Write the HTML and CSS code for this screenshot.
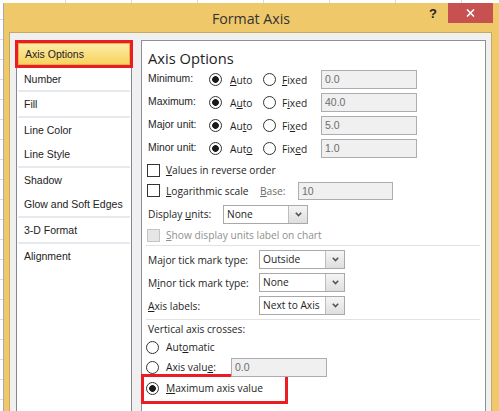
FILE: index.html
```html
<!DOCTYPE html>
<html>
<head>
<meta charset="utf-8">
<link rel="stylesheet" href="styles.css">
</head>
<body>
<div class="dialog">
  <div class="titlebar">
    <div class="title">Format Axis</div>
    <div class="controls">
      <span class="help">?</span>
      <span class="close"><svg width="9" height="8" viewBox="0 0 9 8"><path d="M1 0.5 L8 7.5 M8 0.5 L1 7.5" stroke="#fff" stroke-width="1.6" fill="none"/></svg></span>
    </div>
  </div>
  <div class="client">
    <div class="nav">
      <div class="nav-sel"><span>Axis Options</span></div>
      <div class="item short">Number</div>
      <div class="sep"></div>
      <div class="item">Fill</div>
      <div class="sep"></div>
      <div class="item">Line Color</div>
      <div class="item">Line Style</div>
      <div class="sep"></div>
      <div class="item">Shadow</div>
      <div class="item">Glow and Soft Edges</div>
      <div class="sep"></div>
      <div class="item">3-D Format</div>
      <div class="sep"></div>
      <div class="item">Alignment</div>
    </div>
    <div class="panel">
      <div class="heading">Axis Options</div>

      <div class="axrow">
        <span class="lab-t">Minimum:</span>
        <span class="opt"><span class="radio on"></span><span><u>A</u>uto</span></span>
        <span class="opt opt2"><span class="radio"></span><span><u>F</u>ixed</span></span>
        <span class="field">0.0</span>
      </div>
      <div class="axrow">
        <span class="lab-t">Maximum:</span>
        <span class="opt"><span class="radio on"></span><span>A<u>u</u>to</span></span>
        <span class="opt opt2"><span class="radio"></span><span>F<u>i</u>xed</span></span>
        <span class="field">40.0</span>
      </div>
      <div class="axrow">
        <span class="lab-t">Major unit:</span>
        <span class="opt"><span class="radio on"></span><span>Au<u>t</u>o</span></span>
        <span class="opt opt2"><span class="radio"></span><span>Fi<u>x</u>ed</span></span>
        <span class="field">5.0</span>
      </div>
      <div class="axrow">
        <span class="lab-t">Minor unit:</span>
        <span class="opt"><span class="radio on"></span><span>Aut<u>o</u></span></span>
        <span class="opt opt2"><span class="radio"></span><span>Fix<u>e</u>d</span></span>
        <span class="field">1.0</span>
      </div>

      <div class="chkrow r1"><span class="cb"></span><span><u>V</u>alues in reverse order</span></div>
      <div class="logrow">
        <span class="chkrow"><span class="cb"></span><span><u>L</u>ogarithmic scale</span></span>
        <span class="dim"><u>B</u>ase:</span>
        <span class="field f18">10</span>
      </div>
      <div class="disprow">
        <span class="lab">Display <u>u</u>nits:</span>
        <span class="select w85"><span class="val">None</span><span class="btn"><svg width="7" height="5" viewBox="0 0 7 5"><path d="M0.8 0.8 L3.5 3.6 L6.2 0.8" stroke="#555" stroke-width="1.6" fill="none"/></svg></span></span>
      </div>
      <div class="chkrow r4 disabled"><span class="cb off"></span><span><u>S</u>how display units label on chart</span></div>

      <div class="hr hr1"></div>

      <div class="tickrow">
        <span class="lab">Major tick mark type:</span>
        <span class="select"><span class="val">Outside</span><span class="btn"><svg width="7" height="5" viewBox="0 0 7 5"><path d="M0.8 0.8 L3.5 3.6 L6.2 0.8" stroke="#555" stroke-width="1.6" fill="none"/></svg></span></span>
      </div>
      <div class="tickrow">
        <span class="lab">M<u>i</u>nor tick mark type:</span>
        <span class="select"><span class="val">None</span><span class="btn"><svg width="7" height="5" viewBox="0 0 7 5"><path d="M0.8 0.8 L3.5 3.6 L6.2 0.8" stroke="#555" stroke-width="1.6" fill="none"/></svg></span></span>
      </div>
      <div class="tickrow">
        <span class="lab"><u>A</u>xis labels:</span>
        <span class="select"><span class="val">Next to Axis</span><span class="btn"><svg width="7" height="5" viewBox="0 0 7 5"><path d="M0.8 0.8 L3.5 3.6 L6.2 0.8" stroke="#555" stroke-width="1.6" fill="none"/></svg></span></span>
      </div>

      <div class="hr hr2"></div>

      <div class="vac">Vertical axis crosses:</div>
      <div class="radrow"><span class="radio"></span><span>Aut<u>o</u>matic</span></div>
      <div class="valrow">
        <span class="radrow"><span class="radio"></span><span>Axis valu<u>e</u>:</span></span>
        <span class="field">0.0</span>
      </div>
      <div class="maxbox"><span class="radio on"></span><span><u>M</u>aximum axis value</span></div>
    </div>
  </div>
</div>
</body>
</html>
```
FILE: styles.css
```css
* { box-sizing: border-box; }
html, body { margin: 0; }
body {
  width: 499px;
  height: 411px;
  overflow: hidden;
  padding: 3px 0 0 3px;
  background-color: #fff;
  background-image:
    repeating-linear-gradient(to right, transparent 0 65px, #dadada 65px 66px),
    repeating-linear-gradient(to bottom, transparent 0 19px, #dadada 19px 20px);
  font-family: "Liberation Sans", Arial, sans-serif;
  color: #1e1e1e;
}
u { text-underline-offset: 1px; }

.dialog {
  width: 496px;
  height: 408px;
  background: #efc86a;
  border-left: 1px solid #a8a8a8;
  display: flex;
  flex-direction: column;
}
.titlebar {
  height: 29px;
  flex: none;
  display: grid;
  grid-template-columns: 1fr auto 1fr;
  padding: 0 6px 0 5px;
}
.title {
  grid-column: 2;
  align-self: center;
  font-family: "Open Sans", sans-serif;
  font-size: 14.2px;
  color: #333;
  padding-top: 2px;
}
.controls {
  grid-column: 3;
  justify-self: end;
  align-self: start;
  display: flex;
  align-items: center;
  height: 20px;
  gap: 11px;
}
.help {
  font-family: "Liberation Sans", sans-serif;
  font-weight: bold;
  font-size: 13px;
  color: #222;
}
.close {
  width: 45px;
  height: 20px;
  background: #c75050;
  display: flex;
  align-items: center;
  justify-content: center;
}
.close svg { display: block; }

.client {
  flex: 1;
  margin: 0 7px 0 5px;
  background: #f0f0f0;
  border: 1px solid #c4a964;
  border-bottom: none;
  display: flex;
  gap: 9px;
  padding: 7px 5px 0 6px;
}

/* left navigation */
.nav {
  width: 116px;
  flex: none;
  background: #fff;
  border: 1px solid #828790;
  border-bottom: none;
  font-size: 10.5px;
  color: #222;
}
.nav-sel {
  margin: -1px -2px 0;
  height: 28px;
  border: 3px solid #ec1c24;
}
.nav-sel span {
  display: block;
  height: 22px;
  border: 1px solid #e2b64a;
  background: linear-gradient(#fdeca6, #f7d35f);
  padding-left: 6px;
  line-height: 20px;
}
.item {
  height: 24px;
  line-height: 24px;
  padding-left: 7px;
  white-space: nowrap;
}
.item.short { height: 22px; line-height: 22px; }
.sep {
  height: 2px;
  margin: 0 1px;
  background: #e8e8ef;
}

/* right panel */
.panel {
  width: 345px;
  flex: none;
  background: #fff;
  border: 1px solid #8e8f96;
  border-bottom: none;
  padding: 0 5px 0 6px;
  font-family: "Open Sans", sans-serif;
  font-size: 10.2px;
}
.heading {
  margin-top: 7px;
  height: 20px;
  line-height: 20px;
  font-size: 14.7px;
  color: #1e1e1e;
}
.axrow {
  display: grid;
  grid-template-columns: 61px 55px 57px 96px;
  height: 23px;
  align-items: center;
}
.lab-t {
  font-family: "Liberation Sans", sans-serif;
  font-size: 10.4px;
  margin-top: -3px;
  white-space: nowrap;
}
.opt {
  display: flex;
  align-items: center;
  gap: 8px;
}
.opt2 { gap: 6px; margin-left: -1px; }
.radio {
  width: 13px;
  height: 13px;
  flex: none;
  border: 1px solid #333;
  border-radius: 50%;
  background: #fff;
}
.radio.on {
  background: radial-gradient(circle, #1a1a1a 0 3px, #fff 3.7px);
}
.field {
  display: block;
  height: 19px;
  border: 1px solid #abadb3;
  background: #f0f0f0;
  color: #6d6d6d;
  font-family: "Liberation Sans", sans-serif;
  font-size: 10.5px;
  line-height: 17px;
  padding-left: 3px;
}
.field.f18 { height: 18px; line-height: 16px; }

.chkrow {
  display: flex;
  align-items: center;
  gap: 6px;
}
.cb {
  width: 13px;
  height: 13px;
  flex: none;
  margin-left: -1px;
  border: 1px solid #333;
  background: #fff;
}
.cb.off { background: #e6e6e6; border-color: #c4c4c4; }
.disabled { color: #8f8f8f; }
.r1 { height: 20px; }
.logrow {
  display: grid;
  grid-template-columns: 112px 38px 95px;
  height: 21px;
  align-items: center;
}
.dim { color: #6d6d6d; }
.disprow {
  display: grid;
  grid-template-columns: 75px 85px;
  height: 26px;
  align-items: center;
}
.r4 { height: 16px; }

.select {
  display: flex;
  height: 19px;
  border: 1px solid #a9a9a9;
  background: #fff;
}
.select .val {
  flex: 1;
  padding-left: 3px;
  line-height: 17px;
  white-space: nowrap;
  overflow: hidden;
}
.select .btn {
  width: 19px;
  flex: none;
  border-left: 1px solid #bdbdbd;
  background: linear-gradient(#f5f5f5, #dedede);
  display: flex;
  align-items: center;
  justify-content: center;
}
.select .btn svg { display: block; }

.hr {
  height: 1px;
  width: 334px;
  margin-left: -2px;
  background: #e2e2e2;
}
.hr1 { margin-top: 2px; margin-bottom: 2px; }
.hr2 { margin-top: 2px; }

.tickrow {
  display: grid;
  grid-template-columns: 111px 86px;
  height: 23px;
  align-items: center;
}

.vac {
  margin-top: 1px;
  height: 16px;
  line-height: 16px;
}
.radrow {
  display: flex;
  align-items: center;
  gap: 7px;
  height: 20px;
}
.radrow .radio { margin-left: -2px; }
.valrow {
  display: grid;
  grid-template-columns: 83px 96px;
  align-items: center;
  height: 20px;
}
.maxbox {
  margin: -3px 0 0 -7px;
  width: 147px;
  height: 30px;
  border: 3px solid #ec1c24;
  display: flex;
  align-items: center;
  gap: 7px;
  padding: 0 0 2px 2px;
}
```
